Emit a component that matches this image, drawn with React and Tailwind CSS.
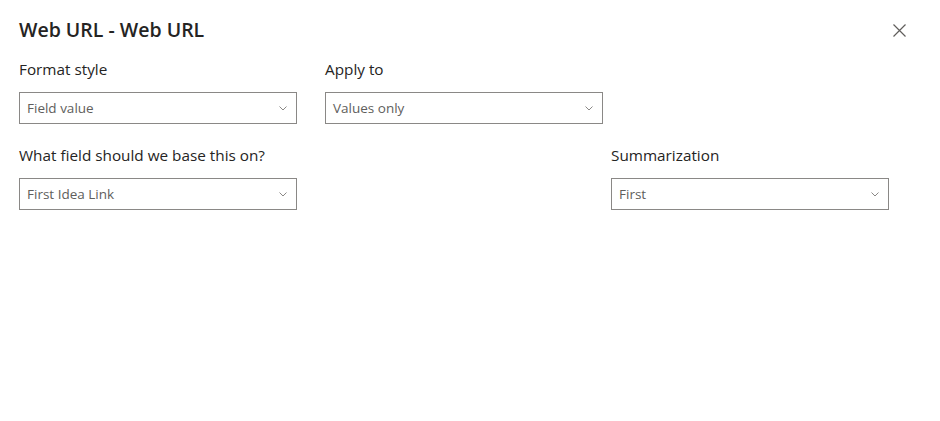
const font = { fontFamily: '"Open Sans", "Noto Sans", sans-serif' }

const Chevron = () => (
  <svg width="8" height="5" viewBox="0 0 8 5" fill="none" className="shrink-0">
    <path d="M0.5 0.5l3.5 3.5L7.5 0.5" stroke="#8a8886" strokeWidth="1" />
  </svg>
)

const Dropdown = ({ value }) => (
  <div className="flex h-8 w-[278px] items-center justify-between border border-[#8a8886] bg-white pl-[7px] pr-[9px] text-[13.5px] text-[#605e5c]">
    <span>{value}</span>
    <Chevron />
  </div>
)

const Field = ({ label, value }) => (
  <div className="flex flex-col">
    <label className="mb-[12px] text-[15.3px] leading-[22px] text-[#252423]">{label}</label>
    <Dropdown value={value} />
  </div>
)

export default function App() {
  return (
    <div style={font} className="h-[421px] w-[940px] bg-white pl-[19px] pt-[16px]">
      <div className="flex items-center justify-between pr-[33px]">
        <h1 className="text-[19.5px] font-semibold leading-[28px] text-[#252423]">Web URL - Web URL</h1>
        <button className="flex h-4 w-4 items-center justify-center">
          <svg width="13" height="13" viewBox="0 0 13 13" fill="none">
            <path d="M0.5 0.5l12 12M12.5 0.5l-12 12" stroke="#605e5c" strokeWidth="1.2" />
          </svg>
        </button>
      </div>
      <div className="mt-[14px] flex gap-[28px]">
        <Field label="Format style" value="Field value" />
        <Field label="Apply to" value="Values only" />
      </div>
      <div className="mt-[20px] flex gap-[314px]">
        <Field label="What field should we base this on?" value="First Idea Link" />
        <Field label="Summarization" value="First" />
      </div>
    </div>
  )
}
